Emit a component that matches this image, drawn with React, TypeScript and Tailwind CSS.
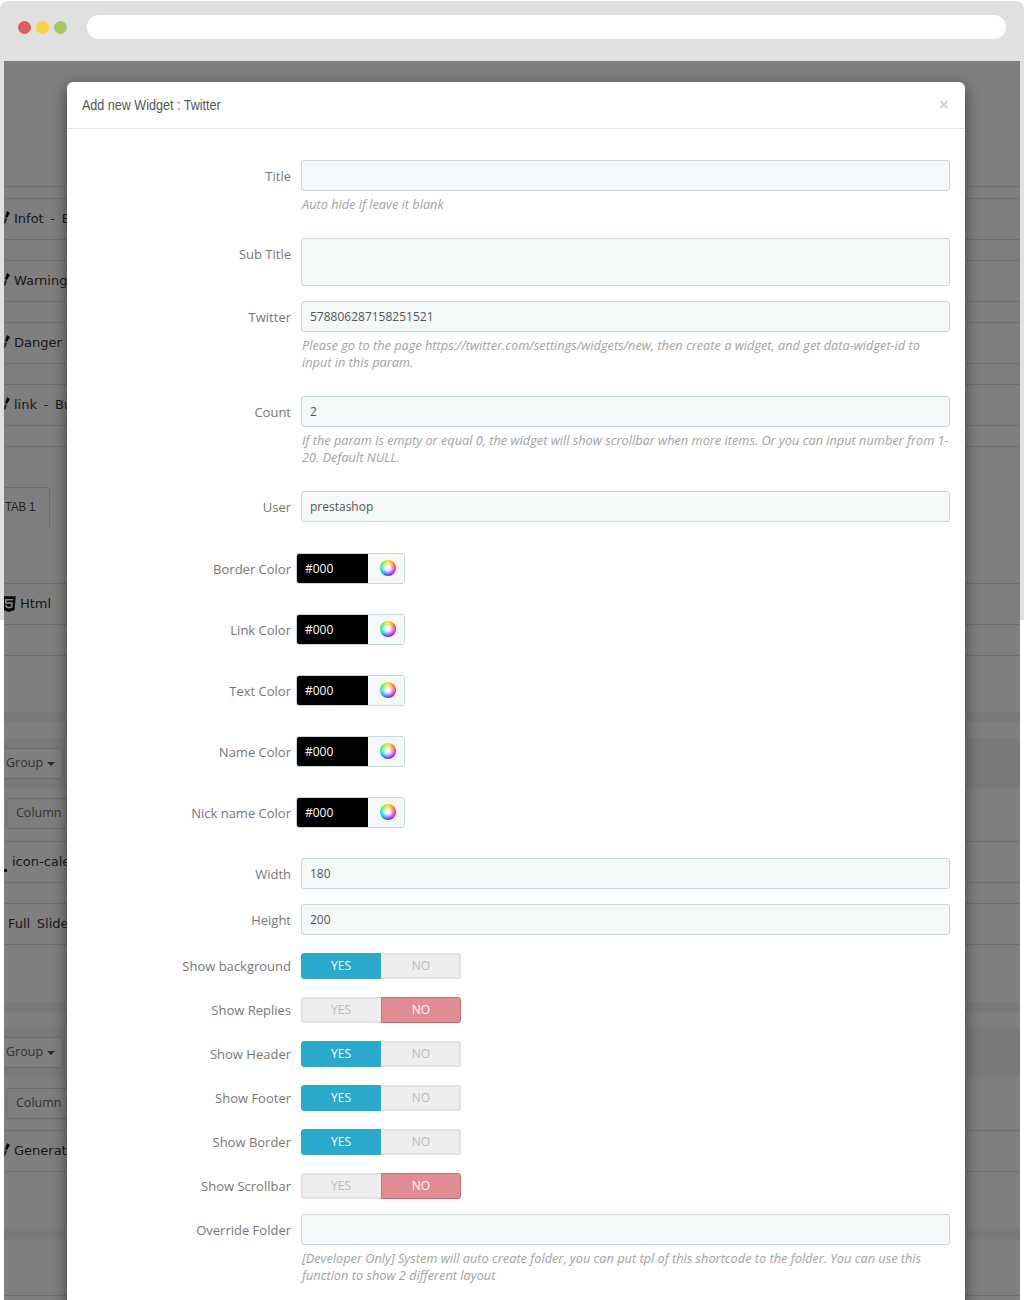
import React from 'react';
import { FaHtml5 } from 'react-icons/fa';

const sans = "font-['Open_Sans',sans-serif]";
const inputCls =
  'block w-full rounded-[3px] border border-[#c7d6db] bg-[#f5f8f9] px-2 text-[12px] text-[#555] outline-none';
const labelCls = 'flex h-[31px] w-[224px] shrink-0 items-center justify-end pt-[2px] text-[13px] text-[#777]';

const Pen = () => (
  <svg viewBox="0 0 10 16" className="absolute left-[-2px] top-[11px] h-4 w-[10px]">
    <path d="M5 1l3 2-3 5-2-1z" fill="#111" />
    <path d="M3 8l2 1-2 5-1-1z" fill="#1c4a66" />
  </svg>
);

// one row of the page behind the modal
const BgRow: React.FC<{ h: string; text?: string; pad?: string; pen?: boolean; mark?: boolean }> = ({ h, text, pad = 'pl-[10px]', pen, mark }) => (
  <div className={`relative border-b border-[#dedede] ${h} ${pad} flex items-center overflow-hidden text-[13px] [word-spacing:2.5px] whitespace-nowrap text-[#333] font-['DejaVu_Sans',sans-serif]`}>
    {pen && <Pen />}
    {mark && <span className="absolute left-0 top-[27px] h-[3px] w-[3px] bg-[#1c3a55]" />}
    {text}
  </div>
);

const Spacer: React.FC<{ h: string; line?: boolean; band?: boolean }> = ({ h, line, band }) => (
  <div className={`${h} ${line ? 'border-b border-[#dedede]' : ''} ${band ? 'bg-[#f4f4f4]' : ''}`} />
);

const GroupBlock = () => (
  <div className="flex h-[50px] items-center bg-[#f4f4f4]">
    <div className={`flex h-[31px] w-[59px] items-center rounded-r-[3px] border border-l-0 border-[#ddd] bg-white pl-[2px] text-[12.5px] text-[#666] ${sans}`}>
      Group
      <span className="ml-1 mt-px h-0 w-0 border-x-[4px] border-t-[4px] border-x-transparent border-t-[#555]" />
    </div>
  </div>
);

const ColumnBtn = () => (
  <div className={`ml-[2px] flex h-[31px] w-[90px] items-center rounded-[3px] border border-[#ddd] bg-white pl-[9px] text-[12.5px] text-[#666] ${sans}`}>
    Column
  </div>
);

const Background = () => (
  <div>
    <Spacer h="h-[126px]" line />
    <Spacer h="h-[12px]" line />
    <BgRow h="h-[41px]" text="Infot - Button" pen />
    <Spacer h="h-[21px]" line />
    <BgRow h="h-[41px]" text="Warning - Button" pen />
    <Spacer h="h-[21px]" line />
    <BgRow h="h-[41px]" text="Danger - Button" pen />
    <Spacer h="h-[21px]" line />
    <BgRow h="h-[41px]" text="link - Button" pen />
    <Spacer h="h-[21px]" line />
    <div className="h-[137px] border-b border-[#dedede] pt-10">
      <div className="flex h-10 w-[46px] items-center rounded-tr-[3px] border-r border-t border-[#ddd] pl-px">
        <span className="origin-left scale-x-[0.83] text-[13.5px] whitespace-nowrap text-[#444] font-['Liberation_Sans',sans-serif]">TAB 1</span>
      </div>
    </div>
    <div className="relative flex h-[41px] items-center overflow-hidden border-b border-[#dedede] pl-4 font-['DejaVu_Sans',sans-serif] text-[13px] text-[#333]">
      <FaHtml5 className="absolute left-[-4px] top-[11px] text-[18px] text-[#111]" />
      Html
    </div>
    <Spacer h="h-[31px]" line />
    <Spacer h="h-[56px]" />
    <Spacer h="h-[10px]" band />
    <Spacer h="h-[16px]" />
    <GroupBlock />
    <div className="flex h-[54px] items-center border-b border-[#dedede] pb-[2px]">
      <ColumnBtn />
    </div>
    <BgRow h="h-[41px]" text="icon-calendar" pad="pl-2" mark />
    <Spacer h="h-[21px]" line />
    <BgRow h="h-[41px]" text="Full Slider" pad="pl-1" />
    <Spacer h="h-[57px]" />
    <Spacer h="h-[10px]" band />
    <Spacer h="h-[15px]" />
    <GroupBlock />
    <div className="flex h-[54px] items-center border-b border-[#dedede] pb-[1px]">
      <ColumnBtn />
    </div>
    <BgRow h="h-[41px]" text="Generate" pen />
    <Spacer h="h-[57px]" />
    <Spacer h="h-[10px]" band />
    <Spacer h="h-[57px]" line />
  </div>
);

const Row: React.FC<{ label: string; mb: string; children: React.ReactNode }> = ({ label, mb, children }) => (
  <div className={`flex items-start ${mb}`}>
    <div className={labelCls}>{label}</div>
    <div className="ml-[10px] w-[649px]">{children}</div>
  </div>
);

const Help: React.FC<{ children: React.ReactNode }> = ({ children }) => (
  <p className="mt-[5px] pl-px text-[12.75px] leading-[17px] italic text-[#a3a3a3]">{children}</p>
);

const TextField: React.FC<{ value?: string }> = ({ value = '' }) => (
  <input readOnly value={value} className={`${inputCls} h-[31px]`} />
);

const ColorRow: React.FC<{ label: string; mb?: string }> = ({ label, mb = 'mb-[30px]' }) => (
  <div className={`flex items-center ${mb}`}>
    <div className={labelCls}>{label}</div>
    <div className="ml-[5px] flex h-[31px] w-[109px] overflow-hidden rounded-[3px] border border-[#c7d6db]">
      <div className="flex w-[71px] items-center bg-black pl-2 text-[12px] text-white">#000</div>
      <div className="flex flex-1 items-center justify-center bg-[#f5f8f9] pb-[2px] pl-[3px]">
        <span className="relative block h-4 w-4 rounded-full bg-[conic-gradient(#ffdd00,#ff6600,#ff00aa,#8800ff,#0066ff,#00dddd,#44ee44,#ffdd00)]">
          <span className="absolute inset-0 rounded-full bg-[radial-gradient(circle,#ffffff_15%,rgba(255,255,255,0)_70%)]" />
        </span>
      </div>
    </div>
  </div>
);

const Toggle: React.FC<{ label: string; on: boolean; mb?: string }> = ({ label, on, mb = 'mb-[18px]' }) => (
  <div className={`flex items-center ${mb}`}>
    <div className="w-[224px] shrink-0 pt-[2px] text-right text-[13px] text-[#777]">{label}</div>
    <div className="ml-[10px] flex h-[26px] w-[160px] text-center text-[12px] leading-[24px]">
      <div className={on
        ? 'w-20 rounded-l-[3px] border border-[#2ba9cc] bg-[#2ba9cc] font-medium text-white'
        : 'w-20 rounded-l-[3px] border-2 border-r-0 border-[#e2e2e2] bg-[#eeeeee] pr-[2px] leading-[22px] text-[#bbb]'}>
        YES
      </div>
      <div className={on
        ? 'w-20 rounded-r-[3px] border-2 border-l-0 border-[#e2e2e2] bg-[#eeeeee] pl-[2px] leading-[22px] text-[#bbb]'
        : 'w-20 rounded-r-[3px] border border-[#c96b70] bg-[#e08c92] font-medium text-white'}>
        NO
      </div>
    </div>
  </div>
);

const Modal = () => (
  <div className={`absolute left-[67px] top-[82px] w-[898px] rounded-t-[6px] bg-white shadow-[0_5px_15px_rgba(0,0,0,0.5)] ${sans}`}>
    <div className="flex h-[47px] items-center justify-between border-b border-[#e5e5e5] pl-[15px] pr-[16px]">
      <h4 className="origin-left scale-x-[0.81] text-[15.5px] whitespace-nowrap text-[#555] font-['Liberation_Sans',sans-serif]">Add new Widget : Twitter</h4>
      <span className="pb-[2px] text-[18px] font-bold leading-none text-[#cfcfcf]">×</span>
    </div>
    <div className="pt-[31px] pb-10">
      <Row label="Title" mb="mb-[25px]">
        <TextField />
        <Help>Auto hide if leave it blank</Help>
      </Row>
      <Row label="Sub Title" mb="mb-[15px]">
        <textarea readOnly className={`${inputCls} h-[48px] resize-none`} />
      </Row>
      <Row label="Twitter" mb="mb-[25px]">
        <TextField value="578806287158251521" />
        <Help>
          Please go to the page https://twitter.com/settings/widgets/new, then create a widget, and get data-widget-id to input in this param.
        </Help>
      </Row>
      <Row label="Count" mb="mb-[25px]">
        <TextField value="2" />
        <Help>
          If the param is empty or equal 0, the widget will show scrollbar when more items. Or you can input number from 1-20. Default NULL.
        </Help>
      </Row>
      <Row label="User" mb="mb-[31px]">
        <TextField value="prestashop" />
      </Row>
      <ColorRow label="Border Color" />
      <ColorRow label="Link Color" />
      <ColorRow label="Text Color" />
      <ColorRow label="Name Color" />
      <ColorRow label="Nick name Color" />
      <Row label="Width" mb="mb-[15px]">
        <TextField value="180" />
      </Row>
      <Row label="Height" mb="mb-[18px]">
        <TextField value="200" />
      </Row>
      <Toggle label="Show background" on />
      <Toggle label="Show Replies" on={false} />
      <Toggle label="Show Header" on />
      <Toggle label="Show Footer" on />
      <Toggle label="Show Border" on />
      <Toggle label="Show Scrollbar" on={false} mb="mb-[15px]" />
      <Row label="Override Folder" mb="mb-0">
        <TextField />
        <Help>
          [Developer Only] System will auto create folder, you can put tpl of this shortcode to the folder. You can use this function to show 2 different layout
        </Help>
      </Row>
    </div>
  </div>
);

export default function App() {
  return (
    <div className="relative h-[1300px] w-[1024px] overflow-hidden bg-white">
      {/* browser chrome */}
      <div className="mt-px flex h-[60px] items-start rounded-t-[8px] bg-[#e0e0e0] pl-[18px] pt-[14px]">
        <div className="flex h-6 items-center gap-[5px]">
          <span className="h-[13px] w-[13px] rounded-full bg-[#dd5f5f]" />
          <span className="h-[13px] w-[13px] rounded-full bg-[#fdd13f]" />
          <span className="h-[13px] w-[13px] rounded-full bg-[#a2cb5b]" />
        </div>
        <div className="ml-5 h-6 w-[919px] rounded-full bg-white" />
      </div>

      <div className="flex h-[1239px]">
        <div className="h-[559px] w-1 shrink-0 bg-[#e0e0e0]" />
        <div className="relative flex-1 overflow-hidden bg-white">
          <Background />
          <div className="absolute inset-0 bg-black/50" />
        </div>
        <div className="h-[559px] w-1 shrink-0 bg-[#e0e0e0]" />
      </div>

      <Modal />
    </div>
  );
}
